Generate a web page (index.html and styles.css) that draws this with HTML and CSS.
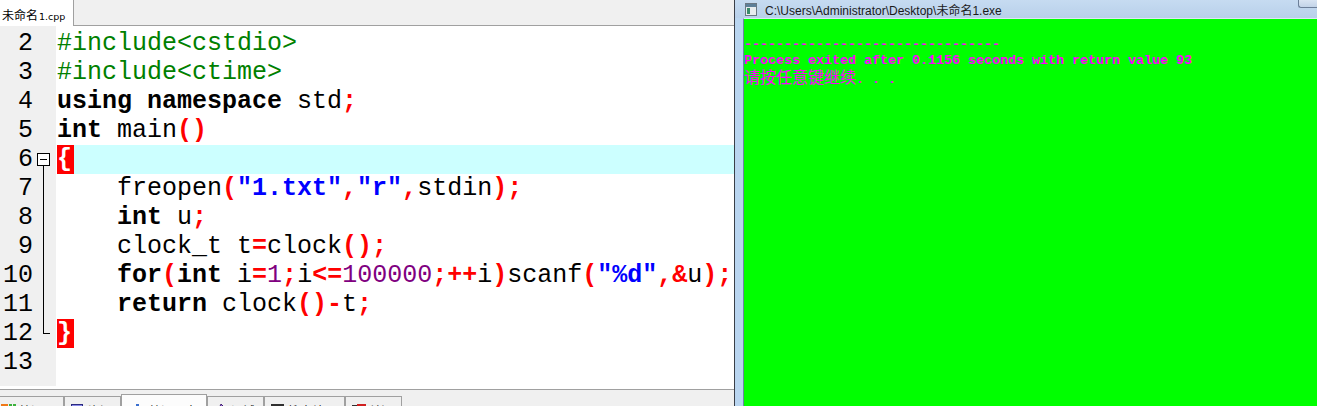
FILE: index.html
```html
<!DOCTYPE html>
<html lang="zh">
<head>
    <meta charset="UTF-8">
    <title>未命名1.cpp</title>
    <link rel="stylesheet" href="styles.css">
</head>
<body>
    <div class="ide">
        <!-- File tabs -->
        <div class="file-tabs">
            <div class="file-tab"><span class="tab-cn">未命名</span><span class="tab-ext">1.cpp</span></div>
            <div class="tab-fill"></div>
        </div>

        <!-- Editor -->
        <div class="editor">
            <div class="gutter">
                <div class="gl"><span class="ln">2</span><span class="fold"></span></div>
                <div class="gl"><span class="ln">3</span><span class="fold"></span></div>
                <div class="gl"><span class="ln">4</span><span class="fold"></span></div>
                <div class="gl"><span class="ln">5</span><span class="fold"></span></div>
                <div class="gl"><span class="ln">6</span><span class="fold open"></span></div>
                <div class="gl"><span class="ln">7</span><span class="fold mid"></span></div>
                <div class="gl"><span class="ln">8</span><span class="fold mid"></span></div>
                <div class="gl"><span class="ln">9</span><span class="fold mid"></span></div>
                <div class="gl"><span class="ln">10</span><span class="fold mid"></span></div>
                <div class="gl"><span class="ln">11</span><span class="fold mid"></span></div>
                <div class="gl"><span class="ln">12</span><span class="fold end"></span></div>
                <div class="gl"><span class="ln">13</span><span class="fold"></span></div>
            </div>
            <div class="code">
                <div class="line"><span class="pp">#include&lt;cstdio&gt;</span></div>
                <div class="line"><span class="pp">#include&lt;ctime&gt;</span></div>
                <div class="line"><span class="kw">using namespace</span> std<span class="sy">;</span></div>
                <div class="line"><span class="kw">int</span> main<span class="sy">()</span></div>
                <div class="line hl"><span class="br">{</span></div>
                <div class="line">    freopen<span class="sy">(</span><span class="st">"1.txt"</span><span class="sy">,</span><span class="st">"r"</span><span class="sy">,</span>stdin<span class="sy">);</span></div>
                <div class="line">    <span class="kw">int</span> u<span class="sy">;</span></div>
                <div class="line">    clock_t t<span class="sy">=</span>clock<span class="sy">();</span></div>
                <div class="line">    <span class="kw">for</span><span class="sy">(</span><span class="kw">int</span> i<span class="sy">=</span><span class="nm">1</span><span class="sy">;</span>i<span class="sy">&lt;=</span><span class="nm">100000</span><span class="sy">;++</span>i<span class="sy">)</span>scanf<span class="sy">(</span><span class="st">"%d"</span><span class="sy">,&amp;</span>u<span class="sy">);</span></div>
                <div class="line">    <span class="kw">return</span> clock<span class="sy">()-</span>t<span class="sy">;</span></div>
                <div class="line"><span class="br">}</span></div>
                <div class="line"></div>
            </div>
        </div>

        <!-- Bottom panel tabs -->
        <div class="panel-tabs">
            <div class="ptab first">
                <svg class="picon" width="16" height="16" viewBox="0 0 16 16"><rect x="0" y="1" width="7" height="7" fill="#f07818"/><rect x="8" y="1" width="3" height="7" fill="#3cb23c"/><rect x="12" y="1" width="3" height="7" fill="#3cb23c"/><rect x="0" y="9" width="7" height="6" fill="#3a7ad8"/><rect x="8" y="9" width="7" height="6" fill="#e0c020"/></svg>
                <span>编译器</span>
            </div>
            <div class="ptab">
                <svg class="picon" width="16" height="16" viewBox="0 0 16 16"><rect x="1.5" y="1.5" width="11" height="12" fill="#8a8ae8" stroke="#2a2a80"/><rect x="3" y="4" width="8" height="8" fill="#d8d8f8"/></svg>
                <span>资源</span>
            </div>
            <div class="ptab active">
                <svg class="picon" width="16" height="16" viewBox="0 0 16 16"><rect x="5" y="1" width="3" height="14" fill="#3a6fd0"/><rect x="9" y="5" width="3" height="10" fill="#2a9a3a"/><rect x="1" y="8" width="3" height="7" fill="#d04a2a"/></svg>
                <span>编译日志</span>
            </div>
            <div class="ptab">
                <svg class="picon" width="16" height="16" viewBox="0 0 16 16"><path d="M8 1 L11 4 L5 14 L3 14 L3 12 Z" fill="#9a6ad8" stroke="#402070"/></svg>
                <span>调试</span>
            </div>
            <div class="ptab">
                <svg class="picon" width="16" height="16" viewBox="0 0 16 16"><rect x="1.5" y="1.5" width="12" height="12" fill="#fff" stroke="#303030"/><rect x="2" y="2" width="11" height="2" fill="#303030"/></svg>
                <span>搜索结果</span>
            </div>
            <div class="ptab">
                <svg class="picon" width="16" height="16" viewBox="0 0 16 16"><rect x="1.5" y="2.5" width="12" height="11" fill="#fff" stroke="#303030"/><rect x="6" y="1" width="9" height="6" fill="#d02020"/></svg>
                <span>关闭</span>
            </div>
        </div>
    </div>

    <!-- Console window -->
    <div class="console-win">
        <div class="titlebar">
            <svg class="ticon" width="12" height="13" viewBox="0 0 12 13"><rect x="0.5" y="0.5" width="11" height="12" fill="#e8ecef" stroke="#6a7784"/><rect x="1" y="1" width="10" height="3" fill="#5d7f99"/><rect x="2" y="5" width="3" height="6" fill="#3a8a6a"/></svg>
            <span class="title">C:\Users\Administrator\Desktop\未命名1.exe</span>
            <div class="win-btn"></div>
        </div>
        <div class="console-frame">
            <div class="console">
                <div class="cl">--------------------------------</div>
                <div class="cl short">Process exited after 0.1156 seconds with return value 93</div>
                <div class="cl"><span class="cn">请按任意键继续</span>. . .</div>
            </div>
        </div>
    </div>
</body>
</html>
```

FILE: styles.css
```css
body {
    margin: 0;
    width: 1317px;
    height: 406px;
    overflow: hidden;
    display: flex;
    font-family: "Liberation Sans", "Noto Sans CJK SC", sans-serif;
    background-color: #f0f0f0;
}

/* IDE side */
.ide {
    width: 734px;
    height: 406px;
    border-right: 1px solid #3a3f48;
    display: flex;
    flex-direction: column;
    background-color: #ffffff;
}

.file-tabs {
    height: 26px;
    display: flex;
}

.file-tab {
    width: 73px;
    padding: 6px 0 0 2px;
    box-sizing: border-box;
    background-color: #ffffff;
    color: #000;
    white-space: nowrap;
}

.tab-cn {
    font-size: 12px;
}

.tab-ext {
    font-family: "DejaVu Sans", sans-serif;
    font-size: 9.5px;
    margin-left: 1px;
}

.tab-fill {
    flex: 1;
    background-color: #f0f0f0;
    border-left: 1px solid #a0a0a0;
    border-bottom: 1px solid #a0a0a0;
}

/* Editor */
.editor {
    flex: 1;
    min-height: 0;
    display: flex;
}

.gutter {
    width: 56px;
    padding-top: 3px;
    margin-bottom: 3px;
    background-color: #f0f0f0;
}

.gl {
    height: 29px;
    display: flex;
}

.ln {
    width: 33px;
    text-align: right;
    font-family: "Liberation Mono", monospace;
    font-size: 25px;
    line-height: 29px;
    color: #000;
}

.fold {
    width: 23px;
    position: relative;
}

.fold.open {
    background: linear-gradient(#000, #000) 10px 21px / 1px 8px no-repeat;
}

.fold.open::before {
    content: '';
    position: absolute;
    left: 4px;
    top: 8px;
    width: 13px;
    height: 13px;
    box-sizing: border-box;
    border: 1px solid #000;
    background: linear-gradient(#000, #000) center / 7px 1px no-repeat #fff;
}

.fold.mid {
    background: linear-gradient(#000, #000) 10px 0 / 1px 100% no-repeat;
}

.fold.end {
    background:
        linear-gradient(#000, #000) 10px 0 / 1px 15px no-repeat,
        linear-gradient(#000, #000) 10px 14px / 7px 1px no-repeat;
}

.code {
    flex: 1;
    padding: 3px 0 0 1px;
    font-family: "Liberation Mono", monospace;
    font-size: 25px;
    line-height: 29px;
    color: #000;
}

.line {
    height: 29px;
    white-space: pre;
}

.line.hl {
    background-color: #ccffff;
}

.pp { color: #008000; }
.kw { font-weight: bold; }
.sy { color: #ff0000; font-weight: bold; }
.st { color: #0000ff; font-weight: bold; }
.nm { color: #800080; }

.br {
    background-color: #ff0000;
    color: #ffffff;
    font-weight: bold;
    padding-right: 2px;
}

/* Bottom panel tabs */
.panel-tabs {
    height: 16px;
    flex-shrink: 0;
    border-top: 1px solid #a0a0a0;
    background-color: #f0f0f0;
    display: flex;
    align-items: flex-start;
    overflow: hidden;
}

.ptab {
    margin-top: 6px;
    height: 24px;
    padding: 6px 8px 0 5px;
    box-sizing: border-box;
    border: 1px solid #a0a0a0;
    border-bottom: none;
    display: flex;
    align-items: flex-start;
    gap: 2px;
    font-size: 12px;
    line-height: 14px;
    color: #222;
    white-space: nowrap;
}

.ptab span {
    padding-top: 2px;
}

.ptab.first {
    margin-left: -5px;
}

.ptab.active {
    margin-top: 4px;
    padding: 8px 9px 0 9px;
    background-color: #fcfcfc;
}

.picon {
    flex-shrink: 0;
}

/* Console window */
.console-win {
    flex: 1;
    display: flex;
    flex-direction: column;
    background-color: #b9d5f0;
}

.titlebar {
    height: 18px;
    padding-left: 10px;
    display: flex;
    align-items: center;
    background: linear-gradient(#c6dbf1, #b8d0ea);
}

.ticon {
    margin-right: 8px;
    flex-shrink: 0;
}

.title {
    font-size: 12px;
    color: #1a1a1a;
    white-space: nowrap;
}

.win-btn {
    margin-left: auto;
    align-self: flex-start;
    width: 18px;
    height: 7px;
    border-left: 1px solid #6c7f99;
    border-bottom: 1px solid #6c7f99;
    border-bottom-left-radius: 3px;
    background: linear-gradient(#d8e4f2, #c2d3e8);
}

.console-frame {
    flex: 1;
    display: flex;
    padding-left: 8px;
}

.console {
    flex: 1;
    padding-top: 18px;
    border-left: 1px solid #6d86a3;
    border-top: 1px solid #dce8f5;
    background-color: #00ff00;
    color: #ff00ff;
    font-family: "Liberation Mono", monospace;
    font-size: 13.333px;
    font-weight: bold;
}

.cl {
    height: 16px;
    line-height: 16px;
    white-space: pre;
}

.cl.short {
    height: 15px;
    line-height: 15px;
}

.cn {
    font-family: "Noto Sans CJK SC", sans-serif;
    font-size: 16px;
    font-weight: normal;
}
```
